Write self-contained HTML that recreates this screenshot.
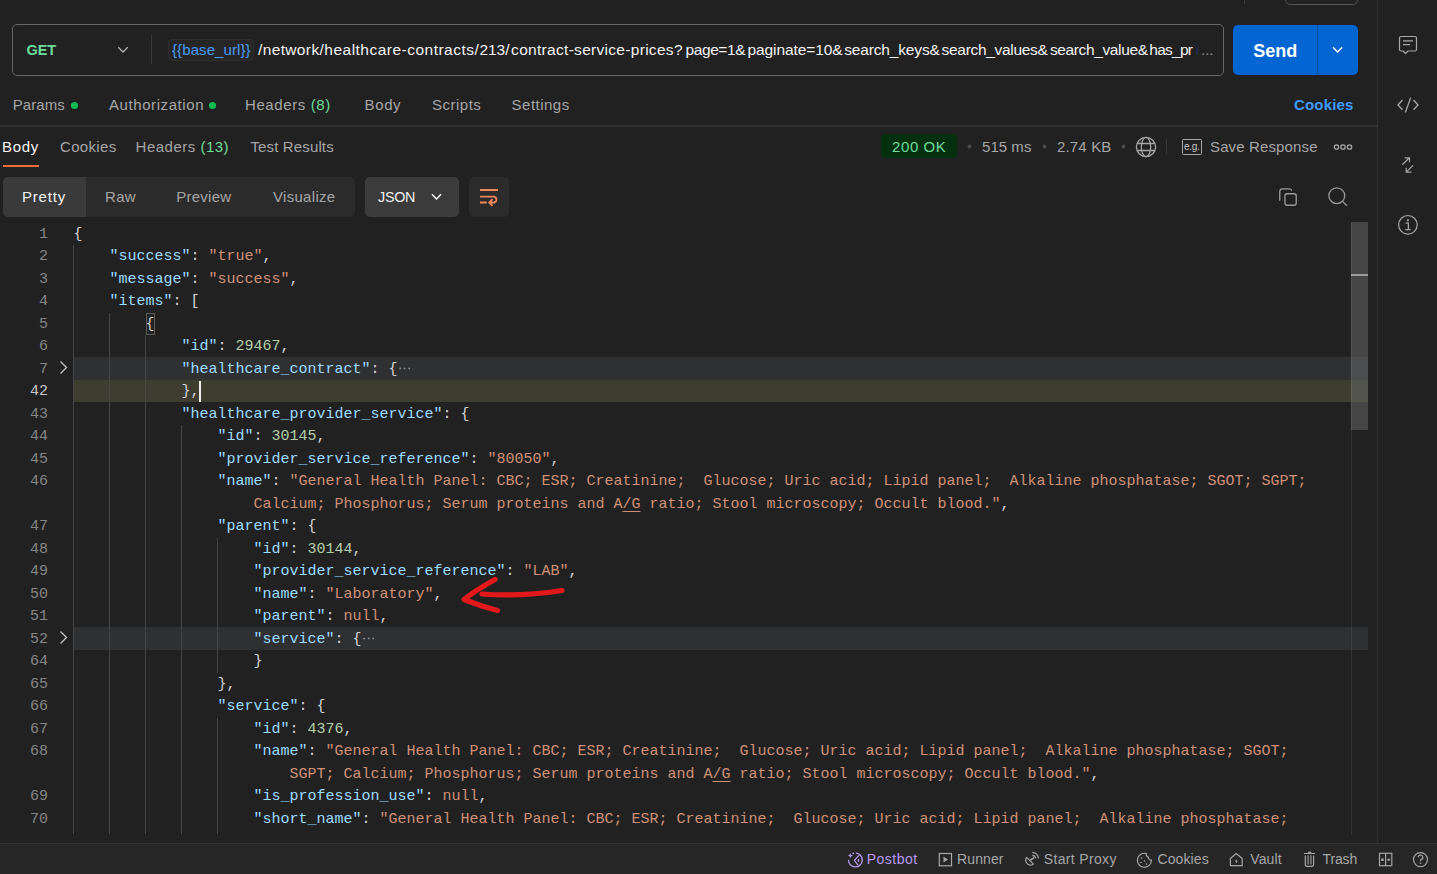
<!DOCTYPE html>
<html><head><meta charset="utf-8">
<style>
*{margin:0;padding:0;box-sizing:border-box}
html,body{width:1437px;height:874px;overflow:hidden;background:#212121;font-family:"Liberation Sans",sans-serif;color:#a6a6a6}
.a{position:absolute;white-space:pre}
.s{font-size:15px}
svg{position:absolute;overflow:visible}
.row{position:absolute;height:22.5px;line-height:22.5px;padding-top:1.2px;white-space:pre;color:#d4d4d4;font-family:"Liberation Mono",monospace;font-size:15px}
.ln{position:absolute;left:0;width:48px;text-align:right;height:22.5px;line-height:22.5px;padding-top:1.2px;color:#858585;font-family:"Liberation Mono",monospace;font-size:15px}
.ln.act{color:#c6c6c6}
.k{color:#9cdcfe}.st{color:#ce9178}.n{color:#b5cea8}
u{text-decoration:underline;text-underline-offset:3px}
.g{position:absolute;width:1px;background:#454545}
#t_get{letter-spacing:-0.15px;margin-left:0.5px}#t_base{letter-spacing:0.091px;margin-left:0.0px}#t_send{letter-spacing:0.001px;margin-left:-0.8px}#t_params{letter-spacing:0.04px;margin-left:-0.2px}#t_auth{letter-spacing:0.583px;margin-left:1.0px}#t_h8{letter-spacing:0.6px;margin-left:0.0px}#t_body1{letter-spacing:0.599px;margin-left:-0.4px}#t_scripts{letter-spacing:0.5px;margin-left:0.0px}#t_settings{letter-spacing:0.485px;margin-left:0.6px}#t_cookiesb{letter-spacing:0.167px;margin-left:0.0px}#t_body2{letter-spacing:0.667px;margin-left:-1.0px}#t_cookies2{letter-spacing:0.333px;margin-left:0.0px}#t_h13{letter-spacing:0.492px;margin-left:-1.4px}#t_test{letter-spacing:0.144px;margin-left:1.4px}#t_200{letter-spacing:0.6px;margin-left:0.0px}#t_ms{letter-spacing:0.04px;margin-left:0.0px}#t_kb{letter-spacing:0.167px;margin-left:0.0px}#t_save{letter-spacing:0.134px;margin-left:0.0px}#t_pretty{letter-spacing:0.8px;margin-left:-1.0px}#t_raw{letter-spacing:0.3px;margin-left:-1.0px}#t_preview{letter-spacing:0.266px;margin-left:0.2px}#t_vis{letter-spacing:0.304px;margin-left:1.0px}#t_json{letter-spacing:-0.266px;margin-left:1.0px}#t_postbot{letter-spacing:0.467px;margin-left:-1.2px}#t_runner{letter-spacing:0.12px;margin-left:-1.0px}#t_proxy{letter-spacing:0.34px;margin-left:-1.2px}#t_cookies3{letter-spacing:0.133px;margin-left:0.4px}#t_vault{letter-spacing:0.15px;margin-left:0.2px}#t_trash{letter-spacing:-0.15px;margin-left:0.6px}#t_u0{letter-spacing:0.364px;margin-left:1.0px}#t_u1{letter-spacing:0.485px;margin-left:-0.7px}#t_u2{letter-spacing:-0.033px;margin-left:0.4px}#t_u3{letter-spacing:0.3px;margin-left:1.1px}#t_u4{letter-spacing:-0.433px;margin-left:-0.4px}#t_u5{letter-spacing:-0.091px;margin-left:0.5px}#t_u6{letter-spacing:-0.155px;margin-left:0.2px}#t_u7{letter-spacing:-0.316px;margin-left:0.6px}#t_u8{letter-spacing:-0.367px;margin-left:0.9px}#t_u9{letter-spacing:-0.75px;margin-left:0.3px}</style></head><body>

<!-- top remnants -->
<div class="a" style="left:1244px;top:0;width:1px;height:4px;background:#3a3a3a"></div>
<div class="a" style="left:1285px;top:-20px;width:73px;height:25px;border:1px solid #555555;border-radius:5px"></div>

<!-- right sidebar -->
<div class="a" style="left:1377px;top:0;width:1px;height:843px;background:#303030"></div>
<svg style="left:1398px;top:35px" width="20" height="20"><path d="M3 1.5 H17 Q18.5 1.5 18.5 3 V14.5 Q18.5 16 17 16 H10 L7.5 18.5 L5 16 H3 Q1.5 16 1.5 14.5 V3 Q1.5 1.5 3 1.5 Z" fill="none" stroke="#a6a6a6" stroke-width="1.2" stroke-linejoin="round"/><path d="M5 5.8 H15 M5 9.7 H12" stroke="#a6a6a6" stroke-width="1.2"/></svg>
<svg style="left:1396px;top:95px" width="24" height="20"><path d="M6.5 5 L2 10 L6.5 14.8 M17.5 5 L22 10 L17.5 14.8 M14.7 2.6 L9.3 17.5" fill="none" stroke="#a6a6a6" stroke-width="1.3"/></svg>
<svg style="left:1400px;top:155px" width="16" height="20"><path d="M2.2 9.7 L9.5 2.8 M4.7 2.8 H9.5 V7.2 M13 10.3 L6.2 17.2 M6.2 12.7 V17.2 H11.5" fill="none" stroke="#a6a6a6" stroke-width="1.2"/></svg>
<svg style="left:1396px;top:213px" width="24" height="24"><circle cx="11.9" cy="11.8" r="9.3" fill="none" stroke="#a6a6a6" stroke-width="1.2"/><circle cx="11.9" cy="7.3" r="1.1" fill="#a6a6a6"/><path d="M9.6 10.2 H12.4 V16.4 M9.3 16.6 H14.6" fill="none" stroke="#a6a6a6" stroke-width="1.3"/></svg>

<!-- URL bar -->
<div class="a" style="left:12px;top:24px;width:1212px;height:52px;border:1px solid #666666;border-radius:5px"></div>
<div id="t_get" class="a" style="left:26px;top:41.5px;font-size:14.5px;font-weight:bold;color:#6bdd9a">GET</div>
<svg style="left:117px;top:46px" width="12" height="8"><path d="M1.3 1.3 L6 6 L10.7 1.3" fill="none" stroke="#b0b0b0" stroke-width="1.3"/></svg>
<div class="a" style="left:151px;top:35px;width:1px;height:29px;background:#3a3a3a"></div>
<div class="a" style="left:168px;top:39px;width:86px;height:22px;border-radius:4px;background:#262626;border:1px solid #2e2e2e"></div>
<div id="t_base" class="a" style="left:172px;top:41px;font-size:15px;color:#4a9cf8">{{base_url}}</div>
<div id="t_u0" class="a" style="left:257px;top:40.5px;font-size:15.5px;color:#f3f3f3">/network/</div>
<div id="t_u1" class="a" style="left:325px;top:40.5px;font-size:15.5px;color:#f3f3f3">healthcare-contracts/</div>
<div id="t_u2" class="a" style="left:479px;top:40.5px;font-size:15.5px;color:#f3f3f3">213/</div>
<div id="t_u3" class="a" style="left:510px;top:40.5px;font-size:15.5px;color:#f3f3f3">contract-service-prices?</div>
<div id="t_u4" class="a" style="left:686px;top:40.5px;font-size:15.5px;color:#f3f3f3">page=1&amp;</div>
<div id="t_u5" class="a" style="left:747px;top:40.5px;font-size:15.5px;color:#f3f3f3">paginate=10&amp;</div>
<div id="t_u6" class="a" style="left:844px;top:40.5px;font-size:15.5px;color:#f3f3f3">search_keys&amp;</div>
<div id="t_u7" class="a" style="left:941px;top:40.5px;font-size:15.5px;color:#f3f3f3">search_values&amp;</div>
<div id="t_u8" class="a" style="left:1049px;top:40.5px;font-size:15.5px;color:#f3f3f3">search_value&amp;</div>
<div id="t_u9" class="a" style="left:1149px;top:40.5px;font-size:15.5px;color:#f3f3f3">has_pr</div>
<div class="a" style="left:1195.5px;top:40.5px;font-size:15.5px;color:#232a5c">i</div>
<div class="a" style="left:1201px;top:41px;font-size:15px;color:#8f8f8f">...</div>

<!-- Send -->
<div class="a" style="left:1233px;top:25px;width:125px;height:50px;background:#0265d2;border-radius:5px"></div>
<div class="a" style="left:1317px;top:25px;width:1px;height:50px;background:#0a4f9c"></div>
<div id="t_send" class="a" style="left:1254px;top:40.5px;font-size:18px;font-weight:bold;color:#fff">Send</div>
<svg style="left:1332px;top:46px" width="12" height="8"><path d="M1 1.2 L5.6 6 L10.2 1.2" fill="none" stroke="#ffffff" stroke-width="1.4"/></svg>

<!-- request tabs -->
<div id="t_params" class="a s" style="left:13px;top:96px">Params</div>
<svg style="left:70px;top:101px" width="9" height="9"><circle cx="4.5" cy="4.5" r="3.6" fill="#0cbb52"/></svg>
<div id="t_auth" class="a s" style="left:108px;top:96px">Authorization</div>
<svg style="left:208px;top:101px" width="9" height="9"><circle cx="4.5" cy="4.5" r="3.6" fill="#0cbb52"/></svg>
<div id="t_h8" class="a s" style="left:245px;top:96px">Headers <span style="color:#6bdd9a">(8)</span></div>
<div id="t_body1" class="a s" style="left:365px;top:96px">Body</div>
<div id="t_scripts" class="a s" style="left:432px;top:96px">Scripts</div>
<div id="t_settings" class="a s" style="left:511px;top:96px">Settings</div>
<div id="t_cookiesb" class="a s" style="left:1294px;top:95.5px;color:#3d9bff;font-weight:bold">Cookies</div>
<div class="a" style="left:0;top:125px;width:1377px;height:2px;background:#313131"></div>

<!-- response tabs -->
<div id="t_body2" class="a s" style="left:3px;top:138px;color:#f3f3f3">Body</div>
<div class="a" style="left:3px;top:165px;width:36px;height:2px;background:#f26b3a"></div>
<div id="t_cookies2" class="a s" style="left:60px;top:138px">Cookies</div>
<div id="t_h13" class="a s" style="left:137px;top:138px">Headers <span style="color:#6bdd9a">(13)</span></div>
<div id="t_test" class="a s" style="left:249px;top:138px">Test Results</div>

<div class="a" style="left:881px;top:134px;width:76px;height:24px;background:#05300f;border-radius:4px"></div>
<div id="t_200" class="a s" style="left:892px;top:138px;color:#6bdd9a">200 OK</div>
<svg style="left:966px;top:143px" width="7" height="7"><circle cx="3.5" cy="3.5" r="2" fill="#4a4a4a"/></svg>
<div id="t_ms" class="a s" style="left:982px;top:138px">515 ms</div>
<svg style="left:1041px;top:143px" width="7" height="7"><circle cx="3.5" cy="3.5" r="2" fill="#4a4a4a"/></svg>
<div id="t_kb" class="a s" style="left:1057px;top:138px">2.74 KB</div>
<svg style="left:1120px;top:143px" width="7" height="7"><circle cx="3.5" cy="3.5" r="2" fill="#4a4a4a"/></svg>
<svg style="left:1135px;top:136px" width="22" height="22"><circle cx="11" cy="11" r="9.6" fill="none" stroke="#a6a6a6" stroke-width="1.3"/><ellipse cx="11" cy="11" rx="4.7" ry="9.6" fill="none" stroke="#a6a6a6" stroke-width="1.3"/><path d="M2.5 7.5 H19.5 M2.5 14.5 H19.5" stroke="#a6a6a6" stroke-width="1.3"/></svg>
<div class="a" style="left:1166px;top:139px;width:1px;height:15px;background:#3a3a3a"></div>
<div class="a" style="left:1182px;top:139px;width:20px;height:15.5px;border:1.3px solid #a6a6a6;border-radius:1.5px"></div>
<div class="a" style="left:1184px;top:140.5px;font-size:10px;letter-spacing:-0.3px;color:#c4c4c4">e.g.</div>
<div id="t_save" class="a s" style="left:1210px;top:138px">Save Response</div>
<svg style="left:1333px;top:143px" width="20" height="8"><circle cx="3.5" cy="4" r="2.2" fill="none" stroke="#a6a6a6" stroke-width="1.3"/><circle cx="10" cy="4" r="2.2" fill="none" stroke="#a6a6a6" stroke-width="1.3"/><circle cx="16.5" cy="4" r="2.2" fill="none" stroke="#a6a6a6" stroke-width="1.3"/></svg>

<!-- toolbar -->
<div class="a" style="left:3px;top:177px;width:352px;height:40px;background:#2b2b2b;border-radius:5px"></div>
<div class="a" style="left:3px;top:177px;width:83px;height:40px;background:#3a3a3a;border-radius:5px 0 0 5px"></div>
<div id="t_pretty" class="a s" style="left:23px;top:188px;color:#f3f3f3">Pretty</div>
<div id="t_raw" class="a s" style="left:106px;top:188px">Raw</div>
<div id="t_preview" class="a s" style="left:176px;top:188px">Preview</div>
<div id="t_vis" class="a s" style="left:272px;top:188px">Visualize</div>
<div class="a" style="left:365px;top:177px;width:94px;height:40px;background:#3b3b3b;border-radius:5px"></div>
<div id="t_json" class="a s" style="left:377px;top:188.5px;font-size:14.3px;color:#f3f3f3">JSON</div>
<svg style="left:431px;top:193px" width="12" height="8"><path d="M1 1.2 L5.5 6 L10 1.2" fill="none" stroke="#ffffff" stroke-width="1.4"/></svg>
<div class="a" style="left:469px;top:177px;width:40px;height:40px;background:#2b2b2b;border-radius:5px"></div>
<svg style="left:478px;top:186px" width="24" height="24"><path d="M2 4 H20 M2 10.6 H16 A3 3 0 0 1 16 16.5 H11.5 M2 16.5 H8.8 M14.5 13.2 L11.2 16.5 L14.5 19.8" fill="none" stroke="#f0875a" stroke-width="1.8"/></svg>
<svg style="left:1278px;top:187px" width="22" height="22"><path d="M1.75 13.3 V4.6 A2.8 2.8 0 0 1 4.55 1.85 H11.3 A2.5 2.5 0 0 1 13.6 3.2" fill="none" stroke="#9a9a9a" stroke-width="1.3" stroke-linecap="round"/><rect x="6.95" y="6.75" width="11.3" height="11.5" rx="2.2" fill="none" stroke="#9a9a9a" stroke-width="1.3"/></svg>
<svg style="left:1326px;top:185px" width="24" height="24"><circle cx="10.8" cy="10.7" r="7.9" fill="none" stroke="#9a9a9a" stroke-width="1.3"/><path d="M16.6 16.4 L20.9 20.8" stroke="#9a9a9a" stroke-width="1.3"/></svg>

<!-- code -->
<div class="a" style="left:73px;top:357.0px;width:1295px;height:22.5px;background:#2f3032"></div><div class="a" style="left:73px;top:627.0px;width:1295px;height:22.5px;background:#2f3032"></div><div class="a" style="left:73px;top:379.5px;width:1295px;height:22.5px;background:#3d3d30"></div><div class="g" style="left:73px;top:245.0px;height:589.0px"></div><div class="g" style="left:109px;top:312.5px;height:521.5px"></div><div class="g" style="left:145px;top:335.0px;height:499.0px"></div><div class="g" style="left:181px;top:425.0px;height:409.0px"></div><div class="g" style="left:217px;top:537.5px;height:135.0px"></div><div class="g" style="left:217px;top:717.5px;height:116.5px"></div><svg style="left:397.4px;top:366.5px" width="14" height="4"><circle cx="3.2" cy="1.5" r="0.95" fill="#8a8a8a"/><circle cx="7.7" cy="1.5" r="0.95" fill="#8a8a8a"/><circle cx="12.2" cy="1.5" r="0.95" fill="#8a8a8a"/></svg><svg style="left:58px;top:356.0px" width="12" height="23"><path d="M2.5 5.5 L8.5 11.5 L2.5 17.5" fill="none" stroke="#c5c5c5" stroke-width="1.3"/></svg><svg style="left:361.4px;top:636.5px" width="14" height="4"><circle cx="3.2" cy="1.5" r="0.95" fill="#8a8a8a"/><circle cx="7.7" cy="1.5" r="0.95" fill="#8a8a8a"/><circle cx="12.2" cy="1.5" r="0.95" fill="#8a8a8a"/></svg><svg style="left:58px;top:626.0px" width="12" height="23"><path d="M2.5 5.5 L8.5 11.5 L2.5 17.5" fill="none" stroke="#c5c5c5" stroke-width="1.3"/></svg><div class="ln" style="top:222.5px">1</div><div class="row" style="top:222.5px;left:73.4px">{</div><div class="ln" style="top:245.0px">2</div><div class="row" style="top:245.0px;left:109.4px"><span class="k">"success"</span>: <span class="st">"true"</span>,</div><div class="ln" style="top:267.5px">3</div><div class="row" style="top:267.5px;left:109.4px"><span class="k">"message"</span>: <span class="st">"success"</span>,</div><div class="ln" style="top:290.0px">4</div><div class="row" style="top:290.0px;left:109.4px"><span class="k">"items"</span>: [</div><div class="ln" style="top:312.5px">5</div><div class="row" style="top:312.5px;left:145.4px">{</div><div class="ln" style="top:335.0px">6</div><div class="row" style="top:335.0px;left:181.4px"><span class="k">"id"</span>: <span class="n">29467</span>,</div><div class="ln" style="top:357.5px">7</div><div class="row" style="top:357.5px;left:181.4px"><span class="k">"healthcare_contract"</span>: {</div><div class="ln act" style="top:380.0px">42</div><div class="row" style="top:380.0px;left:181.4px">},</div><div class="ln" style="top:402.5px">43</div><div class="row" style="top:402.5px;left:181.4px"><span class="k">"healthcare_provider_service"</span>: {</div><div class="ln" style="top:425.0px">44</div><div class="row" style="top:425.0px;left:217.4px"><span class="k">"id"</span>: <span class="n">30145</span>,</div><div class="ln" style="top:447.5px">45</div><div class="row" style="top:447.5px;left:217.4px"><span class="k">"provider_service_reference"</span>: <span class="st">"80050"</span>,</div><div class="ln" style="top:470.0px">46</div><div class="row" style="top:470.0px;left:217.4px"><span class="k">"name"</span>: <span class="st">"General Health Panel: CBC; ESR; Creatinine;  Glucose; Uric acid; Lipid panel;  Alkaline phosphatase; SGOT; SGPT;</span></div><div class="row" style="top:492.5px;left:253.4px"><span class="st">Calcium; Phosphorus; Serum proteins and A<u>/G</u> ratio; Stool microscopy; Occult blood."</span>,</div><div class="ln" style="top:515.0px">47</div><div class="row" style="top:515.0px;left:217.4px"><span class="k">"parent"</span>: {</div><div class="ln" style="top:537.5px">48</div><div class="row" style="top:537.5px;left:253.4px"><span class="k">"id"</span>: <span class="n">30144</span>,</div><div class="ln" style="top:560.0px">49</div><div class="row" style="top:560.0px;left:253.4px"><span class="k">"provider_service_reference"</span>: <span class="st">"LAB"</span>,</div><div class="ln" style="top:582.5px">50</div><div class="row" style="top:582.5px;left:253.4px"><span class="k">"name"</span>: <span class="st">"Laboratory"</span>,</div><div class="ln" style="top:605.0px">51</div><div class="row" style="top:605.0px;left:253.4px"><span class="k">"parent"</span>: <span class="st">null</span>,</div><div class="ln" style="top:627.5px">52</div><div class="row" style="top:627.5px;left:253.4px"><span class="k">"service"</span>: {</div><div class="ln" style="top:650.0px">64</div><div class="row" style="top:650.0px;left:253.4px">}</div><div class="ln" style="top:672.5px">65</div><div class="row" style="top:672.5px;left:217.4px">},</div><div class="ln" style="top:695.0px">66</div><div class="row" style="top:695.0px;left:217.4px"><span class="k">"service"</span>: {</div><div class="ln" style="top:717.5px">67</div><div class="row" style="top:717.5px;left:253.4px"><span class="k">"id"</span>: <span class="n">4376</span>,</div><div class="ln" style="top:740.0px">68</div><div class="row" style="top:740.0px;left:253.4px"><span class="k">"name"</span>: <span class="st">"General Health Panel: CBC; ESR; Creatinine;  Glucose; Uric acid; Lipid panel;  Alkaline phosphatase; SGOT;</span></div><div class="row" style="top:762.5px;left:289.4px"><span class="st">SGPT; Calcium; Phosphorus; Serum proteins and A<u>/G</u> ratio; Stool microscopy; Occult blood."</span>,</div><div class="ln" style="top:785.0px">69</div><div class="row" style="top:785.0px;left:253.4px"><span class="k">"is_profession_use"</span>: <span class="st">null</span>,</div><div class="ln" style="top:807.5px">70</div><div class="row" style="top:807.5px;left:253.4px"><span class="k">"short_name"</span>: <span class="st">"General Health Panel: CBC; ESR; Creatinine;  Glucose; Uric acid; Lipid panel;  Alkaline phosphatase;</span></div><div class="a" style="left:146px;top:312.5px;width:8.5px;height:22.5px;border:1px solid #5e5e5e"></div><div class="a" style="left:199px;top:380.5px;width:2px;height:21.5px;background:#f0f0f0"></div>

<!-- scrollbar -->
<div class="a" style="left:1351px;top:222px;width:17px;height:208px;background:rgba(105,105,105,0.5)"></div>
<div class="a" style="left:1351px;top:274px;width:17px;height:2px;background:#9a9a9a"></div>
<div class="a" style="left:1351px;top:222px;width:1px;height:613px;background:rgba(255,255,255,0.08)"></div>

<!-- red arrow -->
<svg style="left:0;top:0" width="1437" height="874"><path d="M482 594 Q520 597 562 590.5 M495 579.5 Q476 590 464 599.5 Q480 606 497.5 610.5" fill="none" stroke="#e3181b" stroke-width="5.2" stroke-linecap="round" stroke-linejoin="round"/></svg>

<!-- status bar -->
<div class="a" style="left:0;top:843px;width:1437px;height:31px;background:#262626"></div>
<div class="a" style="left:0;top:843px;width:1437px;height:1px;background:#333333"></div>
<svg style="left:844px;top:848px" width="22" height="22"><path d="M12.4 5.2 A6.9 6.9 0 1 1 4.5 12.3" fill="none" stroke="#b89af5" stroke-width="1.3" stroke-linecap="round"/><path d="M6.3 4.9 Q6.5 7.4 9 7.6 Q6.5 7.8 6.3 10.5 Q6.1 7.8 3.4 7.6 Q6.1 7.4 6.3 4.9 Z" fill="#b89af5"/><circle cx="9.3" cy="5.3" r="0.9" fill="#b89af5"/><path d="M15.2 7.2 L10.4 12.4 L14.2 17.3" fill="none" stroke="#b89af5" stroke-width="1.2"/><ellipse cx="14.5" cy="12.4" rx="0.8" ry="1.7" fill="#b89af5"/></svg>
<div id="t_postbot" class="a" style="left:868px;top:851px;font-size:14px;color:#b89af5">Postbot</div>
<svg style="left:938px;top:852px" width="15" height="15"><rect x="1.3" y="1.5" width="12.2" height="12.3" fill="none" stroke="#a6a6a6" stroke-width="1.2"/><path d="M5.5 4.8 L10 7.6 L5.5 10.4 Z" fill="#a6a6a6"/></svg>
<div id="t_runner" class="a" style="left:958px;top:851px;font-size:14px">Runner</div>
<svg style="left:1022px;top:848px" width="22" height="22"><path d="M4.6 9.4 A4.9 4.9 0 0 0 11.4 16.2 Z" fill="none" stroke="#a6a6a6" stroke-width="1.2" stroke-linejoin="round"/><path d="M8.2 12.4 L11.8 9.6" stroke="#a6a6a6" stroke-width="1.8"/><path d="M10.3 7.3 A3.3 3.3 0 0 1 13.5 10.4 M10.3 4.3 A6.2 6.2 0 0 1 16.4 10.4" fill="none" stroke="#a6a6a6" stroke-width="1.2"/></svg>
<div id="t_proxy" class="a" style="left:1045px;top:851px;font-size:14px">Start Proxy</div>
<svg style="left:1136px;top:852px" width="17" height="16"><path d="M10.5 1.6 A7 7 0 1 0 15.4 8 A2.6 2.6 0 0 1 12.4 5.2 A2.6 2.6 0 0 1 10.5 1.6 Z" fill="none" stroke="#a6a6a6" stroke-width="1.2"/><circle cx="5.5" cy="6" r="0.8" fill="#a6a6a6"/><circle cx="8.5" cy="9" r="0.8" fill="#a6a6a6"/><circle cx="5" cy="10.5" r="0.8" fill="#a6a6a6"/><circle cx="10.5" cy="12" r="0.8" fill="#a6a6a6"/></svg>
<div id="t_cookies3" class="a" style="left:1157px;top:851px;font-size:14px">Cookies</div>
<svg style="left:1229px;top:852px" width="15" height="15"><path d="M1.4 6.5 L7.2 1.5 L13.2 6.5 V13.7 H1.4 Z" fill="none" stroke="#a6a6a6" stroke-width="1.2" stroke-linejoin="round"/><path d="M7.3 8.2 V11 M6.2 9.2 L7.3 8.2 L8.4 9.2" fill="none" stroke="#a6a6a6" stroke-width="1"/></svg>
<div id="t_vault" class="a" style="left:1250px;top:851px;font-size:14px">Vault</div>
<svg style="left:1298px;top:848px" width="22" height="22"><path d="M5.9 5.5 H17.1 M10 4.6 Q11.7 3.6 13.4 4.6" fill="none" stroke="#a6a6a6" stroke-width="1.2"/><path d="M7.3 7.5 V16.8 Q7.3 18.4 8.9 18.4 H14 Q15.6 18.4 15.6 16.8 V7.5" fill="none" stroke="#a6a6a6" stroke-width="1.2"/><path d="M10.1 7.3 V16.4 M12.9 7.3 V16.4" stroke="#8a8a8a" stroke-width="1.4"/></svg>
<div id="t_trash" class="a" style="left:1322px;top:851px;font-size:14px">Trash</div>
<svg style="left:1378px;top:852px" width="15" height="15"><rect x="1.5" y="1.3" width="12.3" height="12.4" fill="none" stroke="#a6a6a6" stroke-width="1.2"/><path d="M7.6 1.3 V13.7" stroke="#a6a6a6" stroke-width="1.2"/><rect x="3.2" y="6.5" width="2.5" height="2.5" fill="#a6a6a6"/><circle cx="10.7" cy="7.7" r="1.3" fill="#a6a6a6"/></svg>
<svg style="left:1412px;top:851px" width="17" height="17"><circle cx="8.5" cy="8.6" r="7.0" fill="none" stroke="#a6a6a6" stroke-width="1.2"/><path d="M6.2 6.3 A2.3 2.3 0 1 1 9 8.6 C8.5 8.9 8.5 9.5 8.5 10.3" fill="none" stroke="#a6a6a6" stroke-width="1.2"/><circle cx="8.5" cy="12.3" r="0.8" fill="#a6a6a6"/></svg>

</body></html>
